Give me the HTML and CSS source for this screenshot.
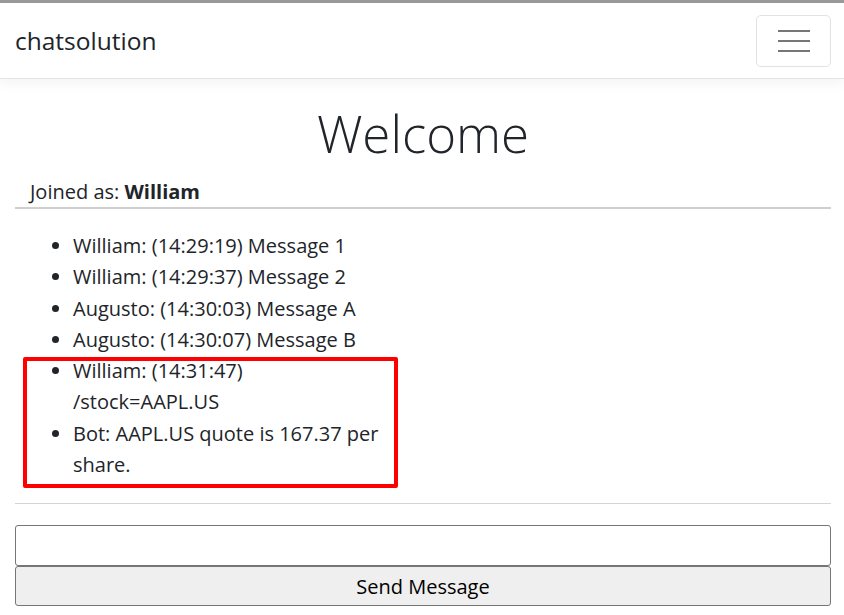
FILE: index.html
```html
<!DOCTYPE html>
<html lang="en">
<head>
<meta charset="utf-8">
<title>chatsolution</title>
<link rel="stylesheet" href="styles.css">
</head>
<body>
<div class="chrome-bar"></div>
<header class="navbar">
  <a class="brand" href="#">chatsolution</a>
  <button class="toggler" type="button" aria-label="Toggle navigation">
    <svg width="32" height="24" viewBox="0 0 32 24" aria-hidden="true">
      <path d="M0 2H32M0 12H32M0 22H32" stroke="#777" stroke-width="2.2" fill="none"/>
    </svg>
  </button>
</header>
<main class="container">
  <h1 class="welcome">Welcome</h1>
  <div class="joined">Joined as: <strong>William</strong></div>
  <div class="messages">
    <ul class="message-list">
      <li>William: (14:29:19) Message 1</li>
      <li>William: (14:29:37) Message 2</li>
      <li>Augusto: (14:30:03) Message A</li>
      <li>Augusto: (14:30:07) Message B</li>
      <li>William: (14:31:47) /stock=AAPL.US</li>
      <li>Bot: AAPL.US quote is 167.37 per share.</li>
    </ul>
    <div class="highlight"></div>
  </div>
  <hr class="divider">
  <form class="send-form">
    <input class="message-input" type="text">
    <button class="send-button" type="button">Send Message</button>
  </form>
</main>
</body>
</html>
```

FILE: styles.css
```css
html, body {
  margin: 0;
  padding: 0;
  background: #fff;
}
body {
  font-family: "Open Sans", "Noto Sans", sans-serif;
  color: #212529;
}
.chrome-bar {
  height: 3px;
  background: #9a9a9a;
}
.navbar {
  height: 76px;
  box-sizing: border-box;
  padding: 12px 13px 11px 15px;
  display: flex;
  align-items: center;
  justify-content: space-between;
  border-bottom: 1px solid #e5e5e5;
  box-shadow: 0 4px 12px rgba(0, 0, 0, 0.05);
  background: #fff;
  position: relative;
}
.brand {
  font-size: 24.5px;
  color: #212529;
  text-decoration: none;
  line-height: 1;
}
.toggler {
  width: 75px;
  height: 52px;
  border: 1px solid #e2e2e2;
  border-radius: 5px;
  background: #fff;
  display: flex;
  align-items: center;
  justify-content: center;
  padding: 0;
}
.container {
  padding: 21px 13px 0 15px;
}
.welcome {
  margin: 0 0 9px;
  font-size: 51px;
  font-weight: 300;
  line-height: 67px;
  text-align: center;
  color: #212529;
}
.joined {
  font-size: 20px;
  line-height: 31px;
  padding-left: 15px;
  border-bottom: 2px solid #cfcfcf;
}
.joined strong {
  font-weight: 700;
}
.messages {
  position: relative;
  width: 370px;
}
.message-list {
  margin: 21px 0 23px;
  padding-left: 58px;
  font-size: 20px;
  line-height: 31.3px;
}
.highlight {
  position: absolute;
  left: 8px;
  top: 127px;
  width: 367px;
  height: 123px;
  border: 4px solid #ff0000;
  border-radius: 2px;
}
.divider {
  margin: 0;
  border: 0;
  border-top: 1.5px solid #d4d4d4;
}
.send-form {
  margin-top: 21px;
}
.message-input {
  display: block;
  width: 100%;
  height: 41px;
  box-sizing: border-box;
  border: 1px solid #767676;
  border-radius: 3px;
  margin: 0;
  font-size: 20px;
}
.send-button {
  display: block;
  width: 100%;
  height: 40px;
  box-sizing: border-box;
  border: 1px solid #767676;
  border-radius: 3px;
  background: #efefef;
  font-family: "Open Sans", "Noto Sans", sans-serif;
  font-size: 20px;
  color: #000;
  margin: 0;
}
```
